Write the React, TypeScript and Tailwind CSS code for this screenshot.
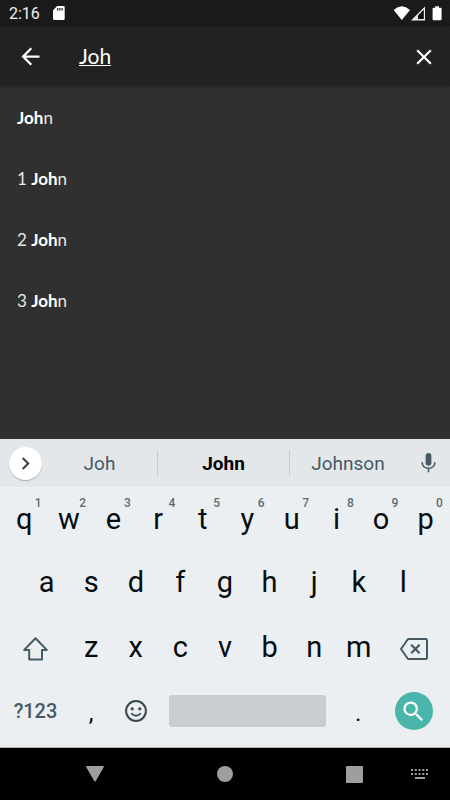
import type { ReactNode } from "react";
import { MdArrowBack, MdChevronRight, MdClose, MdSearch } from "react-icons/md";

interface KeyProps {
    label: string;
    hint?: string;
}

interface SuggestionProps {
    text: string;
    className: string;
}

const topRow = ["q", "w", "e", "r", "t", "y", "u", "i", "o", "p"];
const middleRow = ["a", "s", "d", "f", "g", "h", "j", "k", "l"];
const bottomRow = ["z", "x", "c", "v", "b", "n", "m"];
const books = ["", "1 ", "2 ", "3 "];

function Key({ label, hint }: KeyProps) {
    return (
        <button className="relative flex h-full w-[44.6px] shrink-0 items-center justify-center pt-px text-[29px] leading-none text-[#060c10]">
            {label}
            {hint && (
                <span className="absolute top-[9px] right-[5px] text-[12px] leading-[14px] font-medium text-[#5c6b73]">{hint}</span>
            )}
        </button>
    );
}

function PunctuationKey({ label }: KeyProps) {
    return (
        <button className="flex h-full w-[44.6px] shrink-0 items-center justify-center pt-[4px] text-[24px] leading-none text-[#060c10]">
            {label}
        </button>
    );
}

function WideKey({ children }: { children: ReactNode }) {
    return <button className="flex h-full w-[66.9px] shrink-0 items-center justify-center text-[#37474f]">{children}</button>;
}

function Suggestion({ text, className }: SuggestionProps) {
    return <button className={`flex h-full items-center justify-center pt-[2px] text-[19px] ${className}`}>{text}</button>;
}

function StatusBar() {
    return (
        <div className="flex h-[26px] shrink-0 items-center bg-[#1a1a1a] pr-[8px] pl-[9px] text-white">
            <span className="w-[44px] pt-px font-['Roboto',sans-serif] text-[16px] leading-none text-[#f0f0f0]">2:16</span>
            <svg width="12" height="14" viewBox="0 0 12 14">
                <path fill="currentColor" fillRule="evenodd" d="M4.2 0H10.4Q11.7 0 11.7 1.3V12.7Q11.7 14 10.4 14H1.3Q0 14 0 12.7V4.2ZM4.1 1.9V4.6H5.3V1.9ZM6.3 1.9V4.6H7.5V1.9ZM8.5 1.9V4.6H9.7V1.9Z" />
            </svg>
            <svg className="ml-auto" width="49" height="15" viewBox="0 0 49 15">
                <path fill="currentColor" d="M.6 4Q8.8-3.3 17 4L8.8 14Z" />
                <path fill="currentColor" d="M32 .4V14.5H18Z" opacity=".92" />
                <path fill="#0c0c0c" d="M30.8 3.6V13H25V9.4Z" />
                <path fill="currentColor" d="M42.3.3H46V1.8H47.5Q48.6 1.8 48.6 3V13.2Q48.6 14.3 47.5 14.3H40.7Q39.6 14.3 39.6 13.2V3Q39.6 1.8 40.7 1.8H42.3Z" />
            </svg>
        </div>
    );
}

function Keyboard() {
    return (
        <div className="flex h-[309px] shrink-0 flex-col border-b border-[#a9adaf] bg-[#eceff2] font-['Roboto',sans-serif]">
            <div className="flex h-[48px] shrink-0 items-center bg-[#e3e7e9] text-[#455a64]">
                <button className="ml-[9px] flex size-[33px] items-center justify-center rounded-full bg-white text-[#424242] shadow-[0_1px_1px_rgba(0,0,0,0.25)]">
                    <MdChevronRight size={25} />
                </button>
                <Suggestion text="Joh" className="w-[115px]" />
                <div className="h-[26px] w-px bg-[#c6cbce]" />
                <Suggestion text="John" className="w-[131px] font-bold text-black" />
                <div className="h-[26px] w-px bg-[#c6cbce]" />
                <Suggestion text="Johnson" className="w-[116px]" />
                <svg className="ml-[15px]" width="15" height="20" viewBox="0 0 15 20">
                    <rect x="4.6" y="0" width="5.8" height="12.6" rx="2.9" fill="currentColor" />
                    <path d="M1.1 9.3Q1.4 15.3 7.5 15.3T13.9 9.3M7.5 15.3V19.3" fill="none" stroke="currentColor" strokeWidth="1.6" />
                </svg>
            </div>
            <div className="flex h-[63px] shrink-0 px-[2px]">
                {topRow.map((key, idx) => (
                    <Key key={key} label={key} hint={String((idx + 1) % 10)} />
                ))}
            </div>
            <div className="flex h-[64.5px] shrink-0 justify-center">
                {middleRow.map((key) => (
                    <Key key={key} label={key} />
                ))}
            </div>
            <div className="flex h-[64.5px] shrink-0 px-[2px]">
                <WideKey>
                    <svg className="mt-[4px]" width="25" height="24" viewBox="0 0 25 24" fill="none" stroke="#455a64" strokeWidth="2" strokeLinejoin="round">
                        <path d="M12.5 1.3L23.8 12.9H19V22.6H6.2V12.9H1.2Z" />
                    </svg>
                </WideKey>
                {bottomRow.map((key) => (
                    <Key key={key} label={key} />
                ))}
                <WideKey>
                    <svg className="mt-[5px]" width="28" height="22" viewBox="0 0 28 22" fill="none" stroke="#455a64" strokeWidth="2" strokeLinejoin="round">
                        <path d="M8 1H25.5Q27 1 27 2.5V19.5Q27 21 25.5 21H8L1 11Z" />
                        <path d="M11.2 6.8L19.6 15.2M19.6 6.8L11.2 15.2" strokeWidth="2.3" />
                    </svg>
                </WideKey>
            </div>
            <div className="flex h-[64px] shrink-0 items-center px-[2px]">
                <WideKey>
                    <span className="text-[20px] font-medium tracking-[-0.1px] text-[#455a64]">?123</span>
                </WideKey>
                <PunctuationKey label="," />
                <button className="flex w-[44.6px] shrink-0 justify-center text-[#37474f]">
                    <svg width="22" height="22" viewBox="0 0 22 22">
                        <circle cx="11" cy="11" r="9.9" fill="none" stroke="currentColor" strokeWidth="2" />
                        <circle cx="7.2" cy="8.8" r="1.6" fill="currentColor" />
                        <circle cx="14.8" cy="8.8" r="1.6" fill="currentColor" />
                        <path d="M6.4 13.1Q8 15.7 11 15.7T15.6 13.1" fill="none" stroke="currentColor" strokeWidth="1.8" />
                    </svg>
                </button>
                <button className="mr-[10px] ml-[10.8px] h-[32px] w-[157px] shrink-0 rounded-[3px] bg-[#c9cdd0]" />
                <PunctuationKey label="." />
                <WideKey>
                    <span className="flex size-[38px] items-center justify-center rounded-full bg-[#4ab5ab] text-white">
                        <MdSearch size={27} />
                    </span>
                </WideKey>
            </div>
        </div>
    );
}

function NavigationBar() {
    return (
        <div className="flex h-[52px] shrink-0 items-center bg-black text-[#9e9e9e]">
            <svg className="-mt-px ml-[86px]" width="18" height="16" viewBox="0 0 18 16" fill="currentColor">
                <path d="M.8 0H17.2Q18.4 0 17.7 1.2L9.8 15Q9 16.2 8.2 15L.3 1.2Q-.4 0 .8 0Z" />
            </svg>
            <div className="ml-[113px] size-[16px] rounded-full bg-[#9e9e9e]" />
            <div className="ml-[113px] size-[17px] rounded-[1px] bg-[#9e9e9e]" />
            <svg className="ml-[48px]" width="17" height="10" viewBox="0 0 17 10" fill="currentColor">
                {[0, 3.8, 7.5, 11.3, 15].map((x) => (
                    <g key={x}>
                        <rect x={x} y="0" width="2" height="2" />
                        <rect x={x} y="4" width="2" height="2" />
                    </g>
                ))}
                <rect x="4" y="8" width="10" height="2" />
            </svg>
        </div>
    );
}

export default function App() {
    return (
        <div className="flex h-[800px] w-[450px] flex-col overflow-hidden bg-[#303030] font-['Lato',sans-serif] text-white">
            <StatusBar />
            <div className="flex h-[60px] shrink-0 items-center bg-[#222222] pl-[17px] shadow-[0_1px_3px_rgba(0,0,0,0.35)]">
                <MdArrowBack size={27} className="mt-px" />
                <span className="ml-[35px] border-b border-white text-[21px] leading-[19px]">Joh</span>
                <MdClose size={26} className="mt-px mr-[13px] ml-auto" />
            </div>
            <ul className="flex-1 pt-px">
                {books.map((prefix) => (
                    <li key={prefix} className="flex h-[61px] items-center pl-[17px] text-[17px] whitespace-pre text-[#e8e8e8]">
                        {prefix}<b className="font-bold text-white">Joh</b>n
                    </li>
                ))}
            </ul>
            <Keyboard />
            <NavigationBar />
        </div>
    );
}
